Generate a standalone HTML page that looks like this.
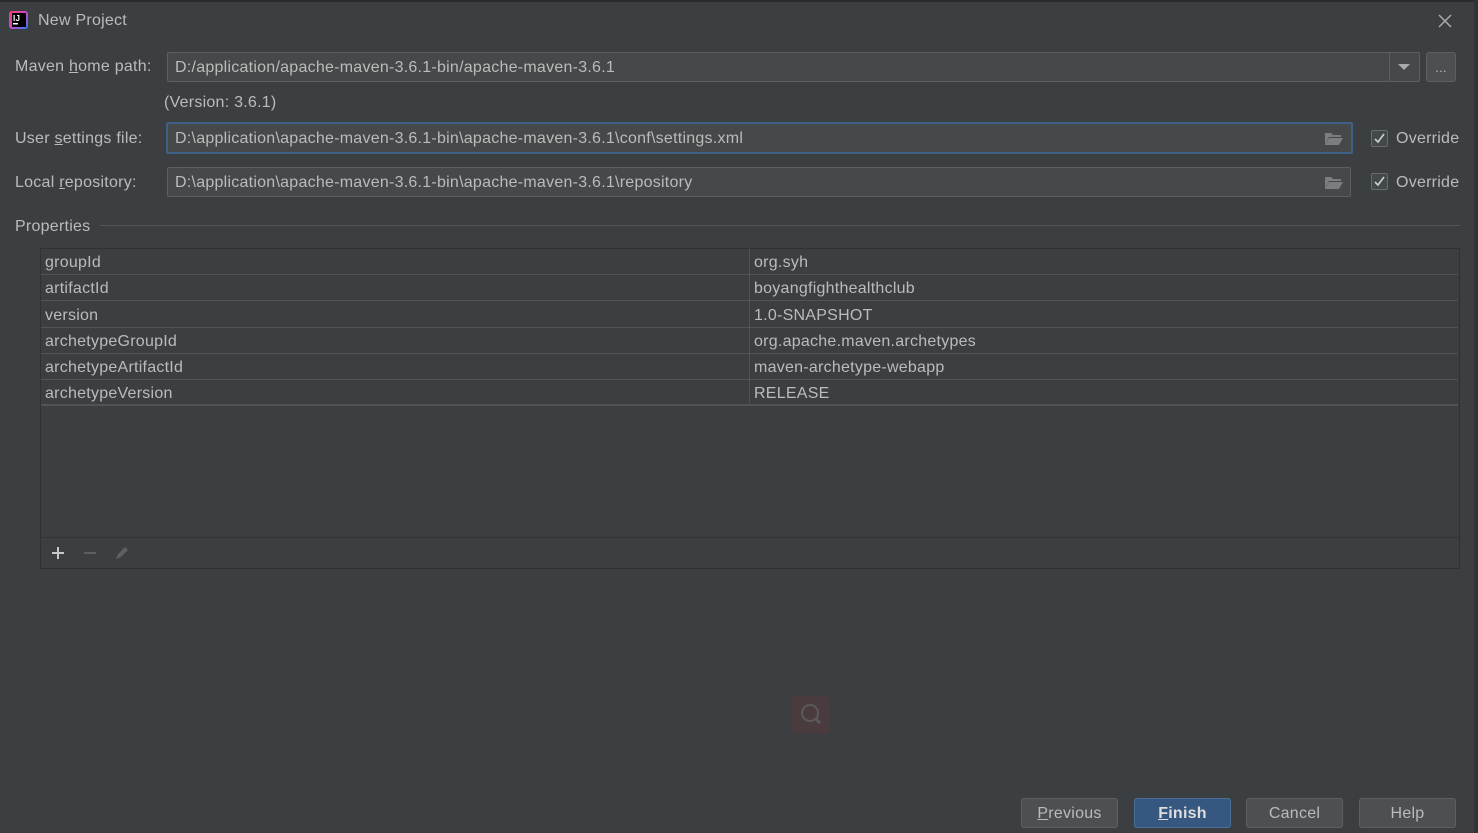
<!DOCTYPE html>
<html><head><meta charset="utf-8"><style>
*{margin:0;padding:0;box-sizing:border-box}
body{width:1478px;height:833px;background:#3c3f41;font-family:"Liberation Sans","Noto Sans CJK SC",sans-serif;font-size:16px;letter-spacing:0.25px;color:#bbbbbb;position:relative;overflow:hidden}
.a{position:absolute;white-space:nowrap}
.field{position:absolute;background:#45494a;border:1px solid #5e6060;border-radius:2px;padding-left:7px;line-height:29px;color:#bbbbbb}
.cb{position:absolute;width:17px;height:17px;border:1px solid #6b6b6b;border-radius:2px;background:#43494a}
.btn{position:absolute;top:798px;height:30px;width:97px;border:1px solid #5e6060;border-radius:3px;background:#4c5052;text-align:center;line-height:30px;color:#bbbbbb}
.row{position:absolute;left:41px;width:1417px;height:26px;border-bottom:1px solid #515456;line-height:28px}
.row span{position:absolute;left:4px}
.row span+span{left:713px}
u{text-decoration:underline}
</style></head><body>
<div class="a" style="left:0;top:0;width:1478px;height:2px;background:#2b2b2b"></div>
<div class="a" style="left:1474px;top:0;width:4px;height:833px;background:#313335"></div>
<svg class="a" style="left:8px;top:10px" width="22" height="20" viewBox="0 0 22 20"><defs><linearGradient id="g" x1="0" y1="0" x2="1" y2="1"><stop offset="0" stop-color="#ff3d6e"/><stop offset=".5" stop-color="#c74ac5"/><stop offset="1" stop-color="#2c7bf0"/></linearGradient></defs><rect x="1" y="1" width="19" height="18" rx="3" fill="url(#g)"/><rect x="4" y="3" width="14" height="14" fill="#000"/><text x="5" y="11" font-size="8" fill="#fff" font-family="Liberation Sans" font-weight="bold">IJ</text><rect x="5" y="13" width="5" height="1.5" fill="#fff"/></svg>
<div class="a" style="left:38px;top:12px;font-size:16px">New Project</div>
<svg class="a" style="left:1437px;top:13px" width="16" height="16"><path d="M2 2L14 14M14 2L2 14" stroke="#aaa" stroke-width="1.5"/></svg>

<div class="a" style="left:15px;top:58px">Maven <u>h</u>ome path:</div>
<div class="field" style="left:167px;top:52px;width:1253px;height:30px">D:/application/apache-maven-3.6.1-bin/apache-maven-3.6.1</div>
<div class="a" style="left:1389px;top:53px;width:1px;height:28px;background:#5e6060"></div>
<svg class="a" style="left:1397px;top:63px" width="14" height="8"><path d="M1 1h12L7 7z" fill="#aaa"/></svg>
<div class="a" style="left:1426px;top:52px;width:30px;height:30px;border:1px solid #5e6060;border-radius:3px;background:#4c5052;text-align:center;line-height:30px;font-size:13px">...</div>

<div class="a" style="left:164px;top:94px">(Version: 3.6.1)</div>

<div class="a" style="left:15px;top:130px">User <u>s</u>ettings file:</div>
<div class="field" style="left:166px;top:122px;width:1187px;height:32px;border:2px solid #3d6185;line-height:29px">D:\application\apache-maven-3.6.1-bin\apache-maven-3.6.1\conf\settings.xml</div>
<div class="a" style="left:15px;top:174px">Local <u>r</u>epository:</div>
<div class="field" style="left:167px;top:167px;width:1184px;height:30px">D:\application\apache-maven-3.6.1-bin\apache-maven-3.6.1\repository</div>
<svg class="a" style="left:1324px;top:130px" width="20" height="16"><path d="M1 3h6l2 2h8v2H5l-4 8z" fill="#7a7e80"/><path d="M5 8h14l-4 7H1z" fill="#7a7e80"/></svg>
<svg class="a" style="left:1324px;top:174px" width="20" height="16"><path d="M1 3h6l2 2h8v2H5l-4 8z" fill="#7a7e80"/><path d="M5 8h14l-4 7H1z" fill="#7a7e80"/></svg>
<div class="cb" style="left:1371px;top:130px"></div>
<svg class="a" style="left:1371px;top:130px" width="17" height="17"><path d="M4 9l3 3 6-8" stroke="#ccc" stroke-width="1.7" fill="none"/></svg>
<div class="a" style="left:1396px;top:130px;font-size:16px">Override</div>
<div class="cb" style="left:1371px;top:173px"></div>
<svg class="a" style="left:1371px;top:173px" width="17" height="17"><path d="M4 9l3 3 6-8" stroke="#ccc" stroke-width="1.7" fill="none"/></svg>
<div class="a" style="left:1396px;top:174px;font-size:16px">Override</div>

<div class="a" style="left:15px;top:218px">Properties</div>
<div class="a" style="left:100px;top:225px;width:1360px;height:1px;background:#555"></div>

<div class="a" style="left:40px;top:248px;width:1420px;height:321px;border:1px solid #2f3133"></div>
<div class="row" style="top:249px"><span>groupId</span><span>org.syh</span></div>
<div class="row" style="top:275px"><span>artifactId</span><span>boyangfighthealthclub</span></div>
<div class="row" style="top:302px"><span>version</span><span>1.0-SNAPSHOT</span></div>
<div class="row" style="top:328px"><span>archetypeGroupId</span><span>org.apache.maven.archetypes</span></div>
<div class="row" style="top:354px"><span>archetypeArtifactId</span><span>maven-archetype-webapp</span></div>
<div class="row" style="top:380px;border-bottom:2px solid #515456"><span>archetypeVersion</span><span>RELEASE</span></div>
<div class="a" style="left:749px;top:249px;width:1px;height:157px;background:#515456"></div>
<div class="a" style="left:41px;top:537px;width:1418px;height:1px;background:#323436"></div>
<svg class="a" style="left:50px;top:545px" width="90" height="16"><path d="M8 2v12M2 8h12" stroke="#c8c8c8" stroke-width="2"/><path d="M34 8h12" stroke="#5d6062" stroke-width="2"/><path d="M66 14l2-5 7-7 3 3-7 7z" fill="#5d6062"/></svg>

<div class="a" style="left:792px;top:696px;width:38px;height:38px;background:#4a3c3e;border-radius:4px"></div>
<svg class="a" style="left:792px;top:696px" width="38" height="38"><circle cx="18" cy="17" r="8" stroke="#5a5a5a" stroke-width="2" fill="none"/><path d="M24 23l4 4" stroke="#5a5a5a" stroke-width="3"/></svg>

<div class="btn" style="left:1021px"><u>P</u>revious</div>
<div class="btn" style="left:1134px;background:#365880;border-color:#4a6f98;color:#ddd;font-weight:bold"><u>F</u>inish</div>
<div class="btn" style="left:1246px">Cancel</div>
<div class="btn" style="left:1359px">Help</div>
</body></html>
